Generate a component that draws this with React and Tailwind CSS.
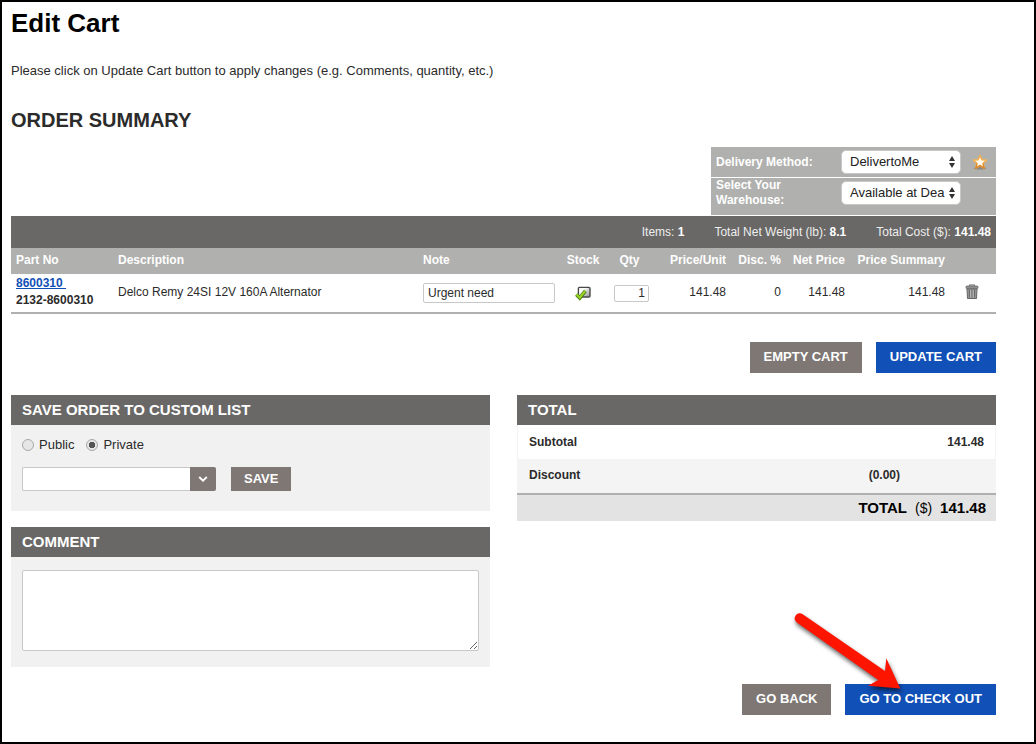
import React from "react";

const columns = [
  { label: "Part No", width: "w-[102px]", align: "text-left" },
  { label: "Description", width: "", align: "text-left" },
  { label: "Note", width: "w-[143px]", align: "text-left" },
  { label: "Stock", width: "w-[44px]", align: "text-center" },
  { label: "Qty", width: "w-[49px]", align: "text-center" },
  { label: "Price/Unit", width: "w-[77px]", align: "text-right" },
  { label: "Disc. %", width: "w-[55px]", align: "text-right" },
  { label: "Net Price", width: "w-[64px]", align: "text-right" },
  { label: "Price Summary", width: "w-[100px]", align: "text-right" },
];

function StarIcon() {
  return (
    <svg className="h-4 w-4" viewBox="0 0 16 16" aria-hidden="true">
      <ellipse cx="8" cy="14.2" rx="6.2" ry="1.4" fill="#8b8783" />
      <path
        d="M8 1.4l1.9 4.3 4.7.4-3.5 3.1 1 4.8L8 11.6 3.9 14l1-4.8L1.4 6.1l4.7-.4z"
        fill="#fffaf0"
        stroke="#f3b04f"
        strokeWidth="1.5"
        strokeLinejoin="round"
      />
      <path d="M4.9 9.6L3.9 14 8 11.6l4.1 2.4-1-4.4" fill="none" stroke="#dc8a2c" strokeWidth="1.3" />
    </svg>
  );
}

function StockIcon() {
  return (
    <svg className="inline-block h-4 w-4" viewBox="0 0 16 16" role="img" aria-label="In stock">
      <defs>
        <linearGradient id="stock-box" x1="0" y1="0" x2="1" y2="1">
          <stop offset="0.3" stopColor="#fff" />
          <stop offset="1" stopColor="#8e8e8e" />
        </linearGradient>
      </defs>
      <rect x="3.4" y="2.4" width="11.6" height="9.6" rx="1" fill="url(#stock-box)" stroke="#4a4a4a" strokeWidth="1.4" />
      <path d="M1.4 9.4L4.8 13 10.4 5.8" fill="none" stroke="#4d7d12" strokeWidth="3.6" />
      <path d="M1.5 9.3L4.8 12.7 10.2 5.8" fill="none" stroke="#9bd629" strokeWidth="1.9" />
    </svg>
  );
}

function TrashIcon() {
  return (
    <svg className="h-4 w-3.5" viewBox="0 0 14 16" aria-hidden="true">
      <path d="M4.7 2.2V1h4.6v1.2" fill="none" stroke="#6b6b6b" strokeWidth="1.2" />
      <rect x="1" y="2" width="12" height="2.6" rx="0.6" fill="#8f8f8f" stroke="#6a6a6a" strokeWidth="0.8" />
      <path d="M2 5h10l-.5 9.5h-9z" fill="#9a9a9a" stroke="#666" strokeWidth="1" />
      <path d="M4.4 6v7.4M7 6v7.4M9.6 6v7.4" stroke="#606060" strokeWidth="0.9" />
      <path d="M5.6 6v7.4M8.2 6v7.4" stroke="#c4c4c4" strokeWidth="0.8" />
    </svg>
  );
}

function ArrowPointer() {
  return (
    <svg
      className="pointer-events-none absolute -top-[74px] right-[86px] h-[90px] w-[120px] drop-shadow-[1px_3px_2px_rgba(0,0,0,0.6)]"
      viewBox="0 0 120 90"
      aria-hidden="true"
    >
      <path
        d="M12.7 4.2L95 61l1.3-12.7L110.3 78.5 78 75.8 88.3 70 6.8 12.5A4.9 4.9 0 0 1 12.7 4.2z"
        fill="#fd1500"
      />
    </svg>
  );
}

function PopupSelect({ id, value }) {
  return (
    <span className="relative block w-[120px]">
      <select
        id={id}
        defaultValue={value}
        className="block h-6 w-full appearance-none rounded-[5px] border border-[#c8c8c8] bg-white pr-3 pl-2 text-[13px] font-normal text-[#222]"
      >
        <option>{value}</option>
      </select>
      <svg className="pointer-events-none absolute top-1.5 right-1.5 h-3 w-1.5" viewBox="0 0 6 12" aria-hidden="true">
        <path d="M3 0l3 5H0zM3 12l3-5H0z" fill="#333" />
      </svg>
    </span>
  );
}

function Button({ tone = "gray", children }) {
  const color = tone === "blue" ? "bg-[#1150b6]" : "bg-[#7e7774]";
  return (
    <button type="button" className={`${color} h-[31px] px-3.5 pb-0.5 text-[13px] font-bold text-white`}>
      {children}
    </button>
  );
}

function PanelTitle({ children }) {
  return (
    <h3 className="bg-[#696866] px-[11px] text-[15px] leading-[30px] font-bold text-white">{children}</h3>
  );
}

function ListRadio({ id, label, checked }) {
  return (
    <span className="flex items-center gap-[5px]">
      <input
        type="radio"
        id={id}
        name="visibility"
        defaultChecked={checked}
        className="h-3 w-3 appearance-none rounded-full border border-[#a8a8a8] bg-[#e6e6e6] checked:bg-[radial-gradient(circle,#555_0_3px,#e6e6e6_3px)]"
      />
      <label htmlFor={id}>{label}</label>
    </span>
  );
}

export default function App() {
  return (
    <main className="min-h-screen border-2 border-black bg-white pt-1.5 pr-[38px] pb-[27px] pl-[9px] font-['Liberation_Sans',Arial,sans-serif] text-[13px] text-[#2b2b2b]">
      <h1 className="text-[26px] leading-[30px] font-bold text-black">Edit Cart</h1>
      <p className="mt-[23px] leading-5">
        Please click on Update Cart button to apply changes (e.g. Comments, quantity, etc.)
      </p>
      <h2 className="mt-[27px] text-xl leading-6 font-bold">ORDER SUMMARY</h2>

      <section className="mt-[15px] ml-auto flex w-[285px] flex-col gap-px text-xs font-bold text-white">
        <div className="flex h-[30px] items-center bg-[#b0b0ae] pl-[5px]">
          <label htmlFor="delivery" className="w-[125px]">Delivery Method:</label>
          <PopupSelect id="delivery" value="DelivertoMe" />
          <button type="button" aria-label="Set as favorite" className="ml-[11px]">
            <StarIcon />
          </button>
        </div>
        <div className="flex h-[37px] items-start bg-[#b0b0ae] pl-[5px]">
          <label htmlFor="warehouse" className="w-[125px] pr-8 leading-[15px]">Select Your Warehouse:</label>
          <div className="pt-[3px]">
            <PopupSelect id="warehouse" value="Available at Dea" />
          </div>
        </div>
      </section>

      <div className="mt-px flex h-8 items-center justify-end gap-[30px] bg-[#696866] pr-[5px] text-xs text-[#eee]">
        <span>Items: <b className="text-white">1</b></span>
        <span>Total Net Weight (lb): <b className="text-white">8.1</b></span>
        <span>Total Cost ($): <b className="text-white">141.48</b></span>
      </div>
      <table className="w-full table-fixed border-b-2 border-[#b0b0ae] text-xs">
        <thead>
          <tr className="h-[26px] bg-[#b0b0ae] text-white">
            {columns.map((c) => (
              <th key={c.label} className={`${c.width} ${c.align} px-[5px] pb-0.5 font-bold whitespace-nowrap`}>
                {c.label}
              </th>
            ))}
            <th className="w-[46px]" aria-label="Remove" />
          </tr>
        </thead>
        <tbody>
          <tr className="h-[39px]">
            <td className="px-[5px] pb-0.5 leading-[17px] font-bold">
              <a href="#part" className="whitespace-pre text-[#1150b6] underline">{"8600310 "}</a>
              <br />
              2132-8600310
            </td>
            <td className="px-[5px] pb-0.5">Delco Remy 24SI 12V 160A Alternator</td>
            <td className="px-[5px]">
              <input
                aria-label="Note"
                defaultValue="Urgent need"
                className="block h-5 w-[132px] rounded-xs border border-[#c8c8c8] px-1"
              />
            </td>
            <td className="text-center"><StockIcon /></td>
            <td className="px-[5px]">
              <input
                aria-label="Quantity"
                defaultValue="1"
                className="ml-auto block h-[17px] w-[35px] rounded-xs border border-[#c8c8c8] px-[3px] text-right"
              />
            </td>
            <td className="px-[5px] pb-0.5 text-right">141.48</td>
            <td className="px-[5px] pb-0.5 text-right">0</td>
            <td className="px-[5px] pb-0.5 text-right">141.48</td>
            <td className="px-[5px] pb-0.5 text-right">141.48</td>
            <td className="pb-0.5">
              <button type="button" aria-label="Remove item" className="ml-[15px] block">
                <TrashIcon />
              </button>
            </td>
          </tr>
        </tbody>
      </table>

      <div className="mt-7 flex justify-end gap-3.5">
        <Button>EMPTY CART</Button>
        <Button tone="blue">UPDATE CART</Button>
      </div>

      <div className="mt-[22px] grid grid-cols-2 items-start gap-[27px]">
        <div className="flex flex-col gap-4">
          <section className="bg-[#f1f1f1]">
            <PanelTitle>SAVE ORDER TO CUSTOM LIST</PanelTitle>
            <div className="px-[11px] pt-2.5 pb-5">
              <div className="flex h-5 gap-3">
                <ListRadio id="public" label="Public" />
                <ListRadio id="private" label="Private" checked />
              </div>
              <div className="mt-3 flex h-6">
                <input aria-label="List name" className="w-[168px] rounded-l-xs border border-r-0 border-[#c8c8c8] bg-white px-1" />
                <button type="button" aria-label="Show lists" className="flex w-[26px] items-center justify-center rounded-r-xs bg-[#7e7774]">
                  <svg className="h-2 w-2.5" viewBox="0 0 10 8" aria-hidden="true">
                    <path d="M1.2 2L5 5.6 8.8 2" fill="none" stroke="#fff" strokeWidth="1.9" />
                  </svg>
                </button>
                <button type="button" className="ml-[15px] bg-[#7e7774] px-[13px] text-[13px] font-bold text-white">SAVE</button>
              </div>
            </div>
          </section>
          <section className="bg-[#f1f1f1]">
            <PanelTitle>COMMENT</PanelTitle>
            <div className="px-[11px] pt-[13px] pb-4">
              <textarea aria-label="Comment" className="block h-[81px] w-full rounded-xs border border-[#c8c8c8] bg-white p-1" />
            </div>
          </section>
        </div>

        <section>
          <PanelTitle>TOTAL</PanelTitle>
          <dl className="text-xs font-bold">
            <div className="flex h-[34px] items-center justify-between border-x border-[#f4f4f4] px-[11px]">
              <dt>Subtotal</dt>
              <dd>141.48</dd>
            </div>
            <div className="flex h-[34px] items-center justify-between bg-[#f4f4f4] pr-24 pb-0.5 pl-3">
              <dt>Discount</dt>
              <dd>(0.00)</dd>
            </div>
            <div className="flex h-7 items-center justify-end gap-2 border-t-2 border-[#b0b0ae] bg-[#e3e3e3] pr-2.5 text-[15px] text-black">
              <dt className="flex items-center gap-2">
                TOTAL <span className="text-sm font-normal">($)</span>
              </dt>
              <dd>141.48</dd>
            </div>
          </dl>
        </section>
      </div>

      <div className="mt-[17px] flex justify-end gap-3.5">
        <Button>GO BACK</Button>
        <div className="relative">
          <Button tone="blue">GO TO CHECK OUT</Button>
          <ArrowPointer />
        </div>
      </div>
    </main>
  );
}
